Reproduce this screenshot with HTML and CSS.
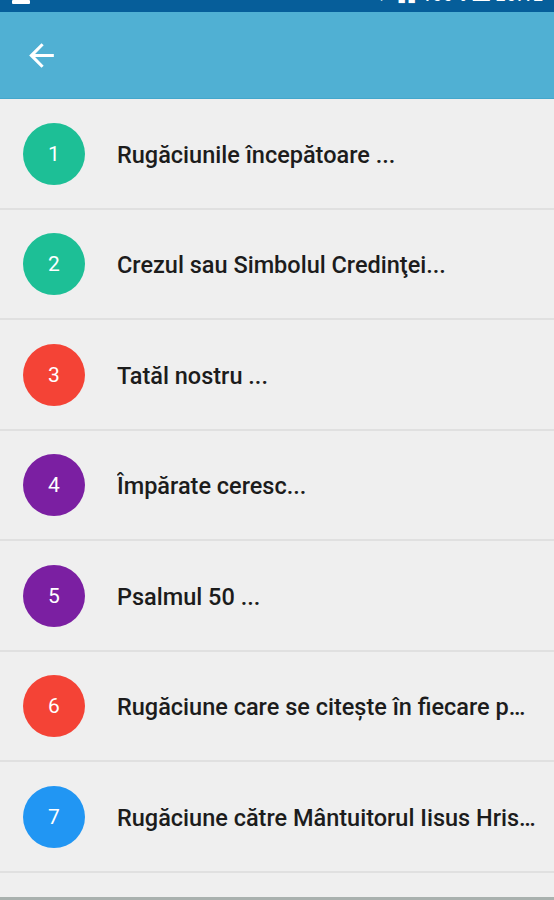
FILE: index.html
```html
<!DOCTYPE html>
<html>
<head>
<meta charset="utf-8">
<link rel="stylesheet" href="styles.css">
</head>
<body>

    <div class="status_bar">
        <span class="notif"></span>
        <span class="status_right">✓ ✈ ▮▮ 100% ▬ 20:12</span>
    </div>

    <div class="app_bar">
        <svg class="back" viewBox="0 0 24 24" width="37" height="37">
            <path d="M20 11H7.83l5.59-5.59L12 4l-8 8 8 8 1.41-1.41L7.83 13H20v-2z" fill="#ffffff"/>
        </svg>
    </div>

    <div class="lista">
        <div class="item">
            <span class="numar verde">1</span>
            <span class="titlu">Rugăciunile începătoare ...</span>
        </div>
        <div class="item">
            <span class="numar verde">2</span>
            <span class="titlu">Crezul sau Simbolul Credinţei...</span>
        </div>
        <div class="item">
            <span class="numar rosu">3</span>
            <span class="titlu">Tatăl nostru ...</span>
        </div>
        <div class="item">
            <span class="numar mov">4</span>
            <span class="titlu">Împărate ceresc...</span>
        </div>
        <div class="item">
            <span class="numar mov">5</span>
            <span class="titlu">Psalmul 50 ...</span>
        </div>
        <div class="item">
            <span class="numar rosu">6</span>
            <span class="titlu">Rugăciune care se citește în fiecare p…</span>
        </div>
        <div class="item">
            <span class="numar albastru">7</span>
            <span class="titlu">Rugăciune către Mântuitorul Iisus Hris…</span>
        </div>
        <div class="rest"></div>
        <div class="banner"></div>
    </div>

</body>
</html>
```

FILE: styles.css
```css
body{
    margin: 0;
    font-family: Roboto, "Noto Sans", sans-serif;
    background-color: #efefef;
    overflow: hidden;
}

.status_bar{
    height: 12px;
    background-color: #065e9a;
    display: flex;
    justify-content: space-between;
    overflow: hidden;
    color: #ffffff;
}

.notif{
    width: 18px;
    height: 4px;
    margin-left: 12px;
    background-color: #ffffff;
    border-radius: 1px;
}

.status_right{
    font-size: 17px;
    font-weight: 500;
    line-height: 17px;
    margin-top: -13px;
    margin-right: 10px;
    letter-spacing: 1px;
}

.app_bar{
    height: 86px;
    background-color: #50b0d3;
    border-bottom: 1px solid #43a7cc;
    display: flex;
    align-items: center;
    padding-left: 23px;
}

.back{
    display: block;
    margin-top: 1px;
}

.item{
    box-sizing: border-box;
    height: 110.5px;
    border-bottom: 2px solid #e0e0e0;
    display: flex;
    align-items: center;
    padding-left: 23px;
    padding-right: 8px;
}

.numar{
    flex: none;
    width: 62px;
    height: 62px;
    border-radius: 50%;
    color: #ffffff;
    font-size: 21px;
    display: flex;
    align-items: center;
    justify-content: center;
    margin-top: 1px;
}

.verde{ background-color: #1dbf96; }
.rosu{ background-color: #f44336; }
.mov{ background-color: #7b1fa2; }
.albastru{ background-color: #2196f3; }

.titlu{
    margin-left: 32px;
    margin-top: 3px;
    font-size: 23.5px;
    font-weight: 500;
    color: #1c1c1c;
    white-space: nowrap;
    overflow: hidden;
    text-overflow: ellipsis;
}

.rest{
    height: 24px;
}

.banner{
    height: 10px;
    background-color: #a9b1ae;
}
```
